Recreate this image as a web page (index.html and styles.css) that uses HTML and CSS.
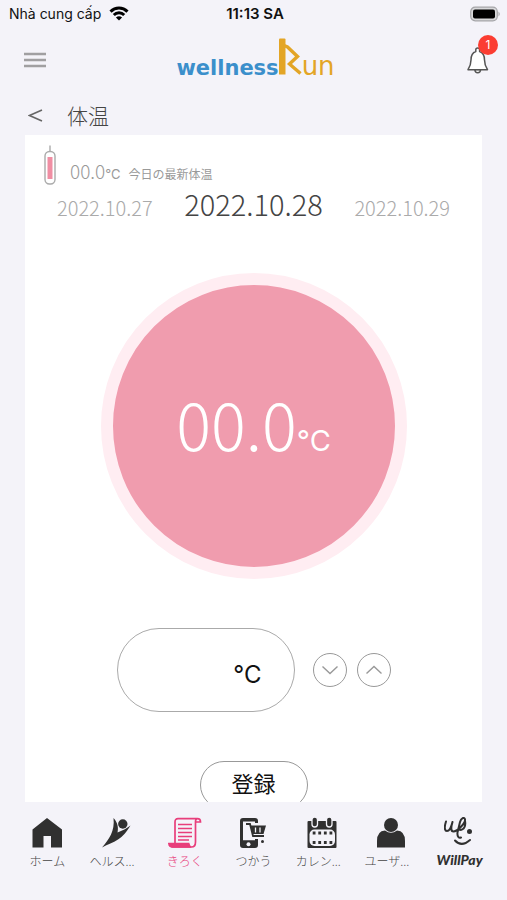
FILE: index.html
```html
<!DOCTYPE html>
<html lang="ja">
<head>
<meta charset="utf-8">
<meta name="viewport" content="width=device-width, initial-scale=1">
<title>体温</title>
<link rel="stylesheet" href="styles.css">
</head>
<body>
<div class="status">
  <div class="carrier"><span>Nhà cung cấp</span>
    <svg width="20" height="15" viewBox="0 0 20 15" fill="none" stroke="#000" stroke-width="3"><path d="M1.500 5.600C6.300.8 13.700.8 18.500 5.600M4.800 9C7.700 6.100 12.300 6.100 15.200 9"/><path d="M10 14.500 6.900 11.400Q10 8.900 13.100 11.400Z" fill="#000" stroke="none"/></svg>
  </div>
  <time class="clock">11:13 SA</time>
  <svg class="battery" width="31" height="16" viewBox="0 0 31 16"><rect x=".7" y="1.200" width="26.600" height="13.600" rx="4.500" fill="#d8d8da" stroke="#a5a5a8" stroke-width="1.200"/><rect x="3" y="3.500" width="22" height="9" rx="2" fill="#000"/><path d="M28.500 5.500Q31 8 28.500 10.500Z" fill="#a5a5a8"/></svg>
</div>
<header class="header">
  <button class="icon-button" aria-label="メニュー"><svg width="22" height="16" viewBox="0 0 22 16" stroke="#a09fa1" stroke-width="2.400"><path d="M0 2h22M0 8h22M0 14h22"/></svg></button>
  <div class="logo">
    <span class="logo-main">wellness</span>
    <svg class="logo-mark" width="23" height="37" viewBox="0 0 23 37"><path d="M0 1.500Q0 .5 1 .5H5.500Q6.500.5 6.500 1.500V36.500H0Z" fill="#e3a526"/><path d="M5 7.500 8.500 9 18.500 18.500 10.500 26 21.500 35.500" fill="none" stroke="#e3a526" stroke-width="3.400"/></svg>
    <span class="logo-end">un</span>
  </div>
  <button class="icon-button bell" aria-label="通知">
    <svg width="22" height="27" viewBox="0 0 22 27" fill="#fff" stroke="#555" stroke-width="1.500" stroke-linejoin="round"><path d="M7.800 22.500Q8 25.800 10.700 25.800T13.600 22.500Z"/><path d="M8.800 4.500V2.800a1.900 1.900 0 0 1 3.800 0V4.500C17 6 17.500 9.500 17.500 13 17.500 17.500 18.500 19.500 20.500 22.700H1C3 19.500 4 17.500 4 13 4 9.500 4.500 6 8.800 4.500Z"/></svg>
    <span class="badge">1</span>
  </button>
</header>
<div class="title-row">
  <a class="back" href="#" aria-label="戻る"><svg width="15" height="13" viewBox="0 0 15 13" fill="none" stroke="#666" stroke-width="1.600"><path d="M14 .9 1.500 6.500 14 12.100"/></svg></a>
  <h1>体温</h1>
</div>
<main class="card">
  <div class="latest">
    <svg width="12" height="40" viewBox="0 0 12 40" fill="none" stroke="#aaa" stroke-width="1.400"><path d="M6 .5V6.500"/><rect x="1" y="6.500" width="10" height="32.500" rx="4.500"/><rect x="3.500" y="12" width="5" height="22" fill="#f08ea3" stroke="none"/></svg>
    <span class="latest-value">00.0</span><span class="latest-unit">°C</span><span class="latest-label">今日の最新体温</span>
  </div>
  <div class="dates">
    <a href="#">2022.10.27</a>
    <strong>2022.10.28</strong>
    <a href="#">2022.10.29</a>
  </div>
  <div class="dial"><span class="dial-value">00.0</span><span class="dial-unit">°C</span></div>
  <div class="entry">
    <label class="field"><input type="text" inputmode="decimal" aria-label="体温"><span>°C</span></label>
    <button class="step" aria-label="下げる"><svg width="18" height="10" viewBox="0 0 18 10"><path d="M1.500 1.500 9 8.500 16.500 1.500"/></svg></button>
    <button class="step" aria-label="上げる"><svg width="18" height="10" viewBox="0 0 18 10"><path d="M1.500 8.500 9 1.500 16.500 8.500"/></svg></button>
  </div>
  <button class="submit">登録</button>
</main>
<nav class="tabs">
  <a href="#"><svg width="32" height="32" viewBox="0 0 32 32" fill="#303030"><path d="M16 1 31 12.500V30.500H20V19H12.500V30.500H1.500V12.500Z"/></svg><span>ホーム</span></a>
  <a href="#"><svg width="32" height="32" viewBox="0 0 32 32" fill="#303030"><circle cx="22.800" cy="7" r="4.700"/><path d="M13.500 1C18 6 18.500 11 17.500 15.500 22 13.500 27 11.500 30.500 8.500 26 16 23 19 18 22.500 13 26 8 27 2 30.500 9 22.500 15 14 13.500 1Z"/></svg><span class="cut">ヘルス...</span></a>
  <a href="#" class="active" aria-current="page"><svg width="34" height="32" viewBox="0 0 34 32" fill="none" stroke="#e83e7b" stroke-width="1.700"><path d="M7 26V5Q7 1.700 10 1.700H29.500Q32.500 1.700 32.500 5H27.500V25Q27.500 30 23.500 30H5Q1 30 1 26.500H20.500Q20.500 30 23.500 30M27.500 5Q27.500 1.700 29.500 1.700"/><path d="M1.500 26.800H20.500L22 30H4Z" fill="#e83e7b"/><path d="M10 7.500H24M10 11.500H24M10 15.500H24M10 19.500H24M10 23H21" stroke-width="1.300"/></svg><span>きろく</span></a>
  <a href="#"><svg width="32" height="32" viewBox="0 0 32 32"><path d="M6 1H18Q21 1 21 4V6H18V4.500H6V23.500H18V22H21V28Q21 31 18 31H6Q3 31 3 28V4Q3 1 6 1Z" fill="#303030"/><path d="M4 23.500H20V28Q20 30 18 30H6Q4 30 4 28Z" fill="#303030"/><circle cx="11.500" cy="27.300" r="2" fill="#f4f3f9"/><path d="M9 7H13L16 19H27" fill="none" stroke="#303030" stroke-width="1.800"/><path d="M13.500 8.500H29L26.500 17H15.500Z" fill="#303030"/><path d="M18.500 10.500V15.500M23 10.500V15.500" stroke="#f4f3f9" stroke-width="1.300"/><circle cx="25.500" cy="24.500" r="1.500" fill="#303030"/></svg><span>つかう</span></a>
  <a href="#"><svg width="32" height="32" viewBox="0 0 32 32"><rect x="1.500" y="4" width="29" height="27" rx="1" fill="#303030"/><rect x="6" y="0" width="5.500" height="10" rx="2.700" fill="#303030" stroke="#f4f3f9" stroke-width="1.300"/><rect x="20.500" y="0" width="5.500" height="10" rx="2.700" fill="#303030" stroke="#f4f3f9" stroke-width="1.300"/><rect x="3.500" y="12.500" width="25.500" height="16.500" rx="5" fill="#f4f3f9"/><path d="M6.700 16H26.500M6.700 25.500H26.500" stroke="#303030" stroke-width="2.800" stroke-dasharray="2.800 2.800"/></svg><span class="cut">カレン...</span></a>
  <a href="#"><svg width="32" height="32" viewBox="0 0 32 32" fill="#303030"><circle cx="16" cy="8" r="7"/><path d="M2 30.500V24Q2 14 10 13.500 16 18 22 13.500 30 14 30 24V30.500Z"/></svg><span class="cut">ユーザ...</span></a>
  <a href="#"><svg width="32" height="32" viewBox="0 0 32 32" fill="none" stroke="#303030" stroke-width="2" stroke-linecap="round" stroke-linejoin="round"><path d="M2 4.500C.5 9 0 14 3 14 6 14 7.500 9 8.500 5 7 10 6.500 14.500 9.500 14.500 13.500 14.500 21.500 6 21 2.500 20.500-.5 17 1 16 5L13.500 15.500C13 19.500 15 21.500 17 20.500M16 13C20 13 22 9 21 4"/><circle cx="25.500" cy="14.500" r="1.500" fill="#303030"/><path d="M11 23.500Q17.500 30.500 26 23"/></svg><span class="pay">WillPay</span></a>
</nav>
</body>
</html>
```
FILE: styles.css
```css
* { box-sizing: border-box; }

body {
  margin: 0;
  height: 100vh;
  display: flex;
  flex-direction: column;
  background: #f4f3f9;
  color: #111;
  font-family: "Noto Sans CJK JP", sans-serif;
}

button {
  font: inherit;
  color: inherit;
  padding: 0;
  border: 0;
  background: none;
}

a { color: inherit; text-decoration: none; }
svg { display: block; flex: none; }

.status {
  display: grid;
  grid-template-columns: 1fr auto 1fr;
  align-items: center;
  height: 27px;
  padding: 0 6px 0 9px;
  font: 14px/20px Inter, sans-serif;
}
.carrier { display: flex; align-items: center; gap: 8px; }
.clock { font-size: 15px; font-weight: 600; }
.battery { justify-self: end; }

.header {
  display: grid;
  grid-template-columns: 1fr auto 1fr;
  align-items: center;
  height: 66px;
  padding: 0 18px 0 24px;
}
.icon-button { justify-self: start; position: relative; }
.bell { justify-self: end; }
.badge {
  position: absolute;
  top: -12px;
  right: -9px;
  width: 20px;
  border-radius: 10px;
  background: #fb3d32;
  color: #fff;
  font: 12px/20px Inter, sans-serif;
  text-align: center;
}

.logo {
  display: flex;
  align-items: baseline;
  height: 44px;
  padding-right: 2px;
  font: 21px/24px "DejaVu Sans", sans-serif;
}
.logo-main { color: #3b8fcb; font-weight: 700; }
.logo-end { color: #e3a526; font-size: 26px; font-weight: 400; }

.title-row {
  display: flex;
  align-items: center;
  gap: 24px;
  height: 42px;
  padding: 2px 28px 0;
}
h1 {
  margin: 0;
  color: #444;
  font-size: 21px;
  line-height: 28px;
  font-weight: 300;
}

.card {
  flex: 1;
  min-height: 0;
  overflow: hidden;
  margin: 0 25px;
  padding-top: 10px;
  background: #fff;
}

.latest {
  display: flex;
  align-items: baseline;
  height: 44px;
  padding-left: 19px;
  color: #999;
  line-height: 24px;
}
.latest svg { align-self: flex-start; }
.latest-value { margin: 14px 0 0 14px; font-size: 19px; font-weight: 300; }
.latest-unit { font: 13px/24px Inter, sans-serif; }
.latest-label { margin-left: 8px; font-size: 12px; font-weight: 400; }

.dates {
  display: flex;
  justify-content: space-between;
  align-items: baseline;
  height: 40px;
  padding: 0 32px;
  color: #aaa;
  font-size: 20px;
  line-height: 28px;
  font-weight: 300;
}
.dates strong { color: #444; font-size: 29px; font-weight: 300; }

.dial {
  display: flex;
  justify-content: center;
  align-items: baseline;
  width: 306px;
  height: 306px;
  margin: 44px auto 0;
  border: 12px solid #ffedf2;
  border-radius: 50%;
  background: #f09cae;
  color: #fff;
  line-height: 276px;
}
.dial-value { font-size: 65px; font-weight: 300; }
.dial-unit { font-family: Inter, sans-serif; font-size: 29px; font-weight: 400; }

.entry {
  display: flex;
  justify-content: center;
  align-items: center;
  gap: 10px;
  margin-top: 49px;
}
.field {
  display: flex;
  align-items: center;
  width: 178px;
  height: 84px;
  margin-right: 8px;
  padding: 10px 32px 0;
  border: 1px solid #aaa;
  border-radius: 42px;
  font: 24px/32px Inter, sans-serif;
}
.field input {
  flex: 1;
  min-width: 0;
  border: 0;
  outline: 0;
  background: none;
  font: inherit;
  text-align: right;
}
.step {
  display: grid;
  place-items: center;
  width: 34px;
  height: 34px;
  border: 1px solid #999;
  border-radius: 50%;
}
.step path { fill: none; stroke: #999; stroke-width: 1.4; }

.submit {
  display: block;
  width: 108px;
  height: 48px;
  margin: 49px auto 0;
  border: 1px solid #999;
  border-radius: 24px;
  font-size: 22px;
  line-height: 40px;
  padding-bottom: 6px;
}

.tabs {
  display: grid;
  grid-template-columns: repeat(7, 1fr);
  height: 98px;
  padding: 15px 13px 0;
  color: #444;
  font-size: 12px;
  line-height: 20px;
  font-weight: 300;
}
.tabs a {
  display: flex;
  flex-direction: column;
  align-items: center;
  gap: 2px;
  white-space: nowrap;
}
.tabs .active { color: #e83e7b; }
.cut { padding-right: 8px; }
.pay { color: #303030; font: italic 900 14px/18px Lato, sans-serif; }
```
